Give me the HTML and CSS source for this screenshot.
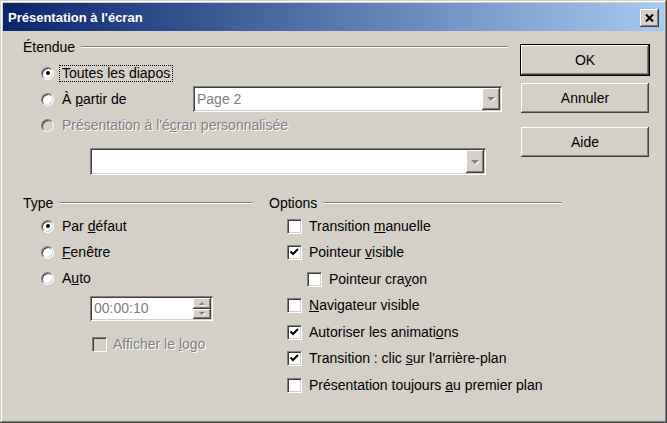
FILE: index.html
```html
<!DOCTYPE html>
<html lang="fr">
<head>
    <meta charset="UTF-8">
    <title>Présentation à l'écran</title>
    <link rel="stylesheet" href="styles.css">
</head>
<body>
    <div class="window">
        <div class="titlebar">
            <span class="title">Présentation à l'écran</span>
            <span class="close">
                <svg width="9" height="8" viewBox="0 0 9 8"><path d="M1 0.5 L8 7.5 M8 0.5 L1 7.5" stroke="#000" stroke-width="2"/></svg>
            </span>
        </div>

        <div class="content">
            <div class="top">
                <div class="range">
                    <div class="group-head first"><span>Étendue</span><span class="rule"></span></div>
                    <div class="row indent">
                        <span class="radio checked"></span><span class="label focus">Toutes les diapos</span>
                    </div>
                    <div class="row indent">
                        <span class="radio"></span><span class="label from">À <u>p</u>artir de</span>
                        <div class="combo page">
                            <span class="combo-text">Page 2</span>
                            <span class="combo-btn"><span class="arrow"></span></span>
                        </div>
                    </div>
                    <div class="row indent disabled">
                        <span class="radio"></span><span class="label">Présentation à l'é<u>c</u>ran personnalisée</span>
                    </div>
                    <div class="combo custom">
                        <span class="combo-text"></span>
                        <span class="combo-btn"><span class="arrow"></span></span>
                    </div>
                </div>

                <div class="buttons">
                    <div class="btn default">OK</div>
                    <div class="btn cancel">Annuler</div>
                    <div class="btn help">Aide</div>
                </div>
            </div>

            <div class="bottom">
                <div class="type">
                    <div class="group-head"><span>Type</span><span class="rule"></span></div>
                    <div class="row indent"><span class="radio checked"></span><span class="label">Par <u>d</u>éfaut</span></div>
                    <div class="row indent"><span class="radio"></span><span class="label"><u>F</u>enêtre</span></div>
                    <div class="row indent"><span class="radio"></span><span class="label">A<u>u</u>to</span></div>
                    <div class="spin">
                        <span class="spin-text">00:00:10</span>
                        <span class="spin-btns">
                            <span class="spin-btn"><span class="arrow up"></span></span>
                            <span class="spin-btn"><span class="arrow"></span></span>
                        </span>
                    </div>
                    <div class="row logo disabled"><span class="check"></span><span class="label">Afficher le <u>l</u>ogo</span></div>
                </div>

                <div class="options">
                    <div class="group-head"><span>Options</span><span class="rule"></span></div>
                    <div class="opt"><span class="check"></span><span class="label">Transition <u>m</u>anuelle</span></div>
                    <div class="opt"><span class="check on"></span><span class="label">Pointeur <u>v</u>isible</span></div>
                    <div class="opt sub"><span class="check"></span><span class="label">Pointeur cra<u>y</u>on</span></div>
                    <div class="opt"><span class="check"></span><span class="label"><u>N</u>avigateur visible</span></div>
                    <div class="opt"><span class="check on"></span><span class="label">Autoriser les animati<u>o</u>ns</span></div>
                    <div class="opt"><span class="check on"></span><span class="label">Transition : clic <u>s</u>ur l'arrière-plan</span></div>
                    <div class="opt"><span class="check"></span><span class="label">Présentation toujours <u>a</u>u premier plan</span></div>
                </div>
            </div>
        </div>
    </div>
</body>
</html>
```

FILE: styles.css
```css
body { margin: 0; font-family: "Liberation Sans", Arial, sans-serif; font-size: 14px; color: #000; background: #d4d0c8; }
.window { width: 667px; height: 423px; box-sizing: border-box; padding: 3px; background: #d4d0c8; box-shadow: inset -1px -1px #404040, inset 1px 1px #d4d0c8, inset -2px -2px #808080, inset 2px 2px #fff; }

.titlebar { height: 28px; display: flex; align-items: center; justify-content: space-between; padding: 0 5px; background: linear-gradient(to right, #0a246a, #a6caf0); color: #fff; font-weight: bold; font-size: 13px; }
.close { width: 19px; height: 18px; margin-top: 2px; display: flex; align-items: center; justify-content: center; background: #d4d0c8; box-shadow: inset -1px -1px #404040, inset 1px 1px #fff, inset -2px -2px #808080, inset 2px 2px #d4d0c8; }

.content { padding-left: 20px; }
.top { display: flex; }
.range { width: 485px; }

.group-head { display: flex; align-items: center; height: 16px; margin-bottom: 2px; }
.group-head.first { margin-top: 8px; margin-bottom: 5px; }
.rule { flex: 1; margin-left: 6px; border-top: 1px solid #808080; border-bottom: 1px solid #fff; }

.row { display: flex; align-items: center; height: 26px; }
.indent { padding-left: 18px; }
.label { padding: 0 2px; line-height: 15px; white-space: nowrap; }
.label.from { width: 133px; box-sizing: border-box; }
.focus { outline: 1px dotted #000; }
.disabled .label { color: #808080; text-shadow: 1px 1px #fff; }

.radio { position: relative; width: 13px; height: 13px; box-sizing: border-box; margin-right: 6px; border-radius: 50%; border: 1px solid; border-color: #808080 #fff #fff #808080; background: #fff; box-shadow: inset 1px 1px #404040, inset -1px -1px #d4d0c8; }
.radio.checked::after { content: ""; position: absolute; left: 3.5px; top: 3.5px; width: 4px; height: 4px; border-radius: 50%; background: #000; }
.disabled .radio { background: #d4d0c8; }

.check { width: 15px; height: 15px; box-sizing: border-box; margin-right: 5px; border: 1px solid; border-color: #808080 #fff #fff #808080; background: #fff; box-shadow: inset 1px 1px #404040, inset -1px -1px #d4d0c8; }
.check.on { background: #fff url("data:image/svg+xml,%3Csvg xmlns='http://www.w3.org/2000/svg' width='13' height='13'%3E%3Cpolyline points='2.5,5.5 5,8 10,3' fill='none' stroke='%23000' stroke-width='2'/%3E%3C/svg%3E") no-repeat center; }
.disabled .check { background: #d4d0c8; }

.combo { display: flex; justify-content: space-between; box-sizing: border-box; padding: 2px; background: #fff; box-shadow: inset 1px 1px #808080, inset -1px -1px #fff, inset 2px 2px #404040, inset -2px -2px #d4d0c8; }
.combo.page { width: 309px; height: 26px; }
.combo.custom { width: 396px; height: 27px; margin: 10px 0 0 67px; }
.combo-text { padding-left: 2px; line-height: 22px; color: #808080; }
.combo-btn { width: 18px; display: flex; align-items: center; justify-content: center; background: #d4d0c8; box-shadow: inset -1px -1px #404040, inset 1px 1px #fff, inset -2px -2px #808080, inset 2px 2px #d4d0c8; }
.arrow { width: 0; height: 0; border-left: 4px solid transparent; border-right: 4px solid transparent; border-top: 4px solid #808080; filter: drop-shadow(1px 1px 0 #fff); }
.arrow.up { border-top: 0; border-bottom: 4px solid #808080; }

.buttons { margin-left: 13px; width: 128px; padding-top: 14px; }
.btn { height: 30px; display: flex; align-items: center; justify-content: center; background: #d4d0c8; box-shadow: inset -1px -1px #404040, inset 1px 1px #fff, inset -2px -2px #808080, inset 2px 2px #d4d0c8; }
.btn.default { outline: 1px solid #000; }
.btn.cancel { margin-top: 8px; }
.btn.help { margin-top: 14px; }

.bottom { display: flex; margin-top: 20px; }
.type { width: 230px; }
.options { width: 293px; margin-left: 16px; }

.spin { display: flex; justify-content: space-between; width: 123px; height: 25px; box-sizing: border-box; margin: 5px 0 0 67px; padding: 2px; background: #fff; box-shadow: inset 1px 1px #808080, inset -1px -1px #fff, inset 2px 2px #404040, inset -2px -2px #d4d0c8; }
.spin-text { padding-left: 2px; line-height: 21px; color: #808080; }
.spin-btns { width: 18px; display: flex; flex-direction: column; }
.spin-btn { flex: 1; display: flex; align-items: center; justify-content: center; background: #d4d0c8; box-shadow: inset -1px -1px #404040, inset 1px 1px #fff, inset -2px -2px #808080, inset 2px 2px #d4d0c8; }
.spin-btn .arrow { border-left-width: 3px; border-right-width: 3px; border-top-width: 3px; }
.spin-btn .arrow.up { border-bottom-width: 3px; }

.row.logo { margin-top: 10px; padding-left: 69px; }
.row.logo .check { margin-right: 4px; }

.opt { display: flex; align-items: center; height: 26.5px; padding-left: 18px; }
.opt.sub { padding-left: 38px; }
```
